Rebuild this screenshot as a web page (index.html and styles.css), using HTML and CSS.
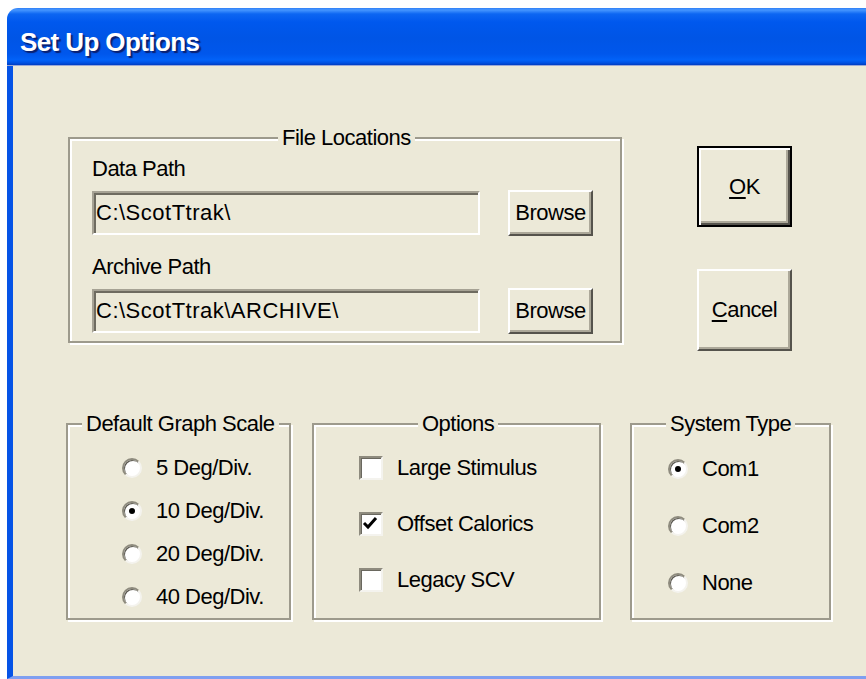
FILE: index.html
```html
<!DOCTYPE html>
<html lang="en">
<head>
<meta charset="utf-8">
<title>Set Up Options</title>
<link rel="stylesheet" href="styles.css">
</head>
<body>
<div class="window">
  <div class="titlebar"><span class="title">Set Up Options</span></div>
  <div class="client">
    <div class="top-row">
      <fieldset class="group group-files">
        <legend class="legend legend-files">File Locations</legend>
        <div class="files-body">
          <div class="path-block">
            <div class="path-label">Data Path</div>
            <div class="path-line">
              <div class="textbox">C:\ScotTtrak\</div>
              <button class="btn btn-browse">Browse</button>
            </div>
          </div>
          <div class="path-block">
            <div class="path-label">Archive Path</div>
            <div class="path-line">
              <div class="textbox">C:\ScotTtrak\ARCHIVE\</div>
              <button class="btn btn-browse">Browse</button>
            </div>
          </div>
        </div>
      </fieldset>
      <div class="actions">
        <button class="btn btn-big btn-default"><u>O</u>K</button>
        <button class="btn btn-big btn-cancel"><u>C</u>ancel</button>
      </div>
    </div>

    <div class="bottom-row">
      <fieldset class="group group-scale">
        <legend class="legend legend-scale">Default Graph Scale</legend>
        <div class="list list-scale">
          <div class="opt opt-scale"><span class="radio"></span><span>5 Deg/Div.</span></div>
          <div class="opt opt-scale"><span class="radio on"></span><span>10 Deg/Div.</span></div>
          <div class="opt opt-scale"><span class="radio"></span><span>20 Deg/Div.</span></div>
          <div class="opt opt-scale"><span class="radio"></span><span>40 Deg/Div.</span></div>
        </div>
      </fieldset>

      <fieldset class="group group-options">
        <legend class="legend legend-options">Options</legend>
        <div class="list list-options">
          <div class="opt opt-check"><span class="checkbox"></span><span>Large Stimulus</span></div>
          <div class="opt opt-check"><span class="checkbox"><svg viewBox="0 0 20 20" width="20" height="20"><polyline points="3,9 7,13 15,4" fill="none" stroke="#000" stroke-width="3"/></svg></span><span>Offset Calorics</span></div>
          <div class="opt opt-check"><span class="checkbox"></span><span>Legacy SCV</span></div>
        </div>
      </fieldset>

      <fieldset class="group group-system">
        <legend class="legend legend-system">System Type</legend>
        <div class="list list-system">
          <div class="opt opt-system"><span class="radio on"></span><span>Com1</span></div>
          <div class="opt opt-system"><span class="radio"></span><span>Com2</span></div>
          <div class="opt opt-system"><span class="radio"></span><span>None</span></div>
        </div>
      </fieldset>
    </div>
  </div>
</div>
</body>
</html>
```

FILE: styles.css
```css
html, body {
  margin: 0;
  padding: 0;
  background: #fff;
  overflow: hidden;
}

body {
  width: 866px;
  height: 679px;
  font-family: "Liberation Sans", Arial, sans-serif;
  font-size: 22px;
  letter-spacing: -0.5px;
  color: #000;
}

/* window frame */
.window {
  margin: 8px 0 0 7px;
  width: 859px;
  height: 671px;
  display: flex;
  flex-direction: column;
}

.titlebar {
  box-sizing: border-box;
  height: 58px;
  padding: 20px 0 0 13px;
  border-radius: 11px 0 0 0;
  background: linear-gradient(to bottom,
    #2f7ff6 0px, #4596ff 2px, #0c66f2 6px, #0058ee 14px,
    #0055e6 30px, #0057ec 46px, #0262f8 52px, #0050e0 55px, #003cc0 57px);
  border-bottom: 1px solid #9aa8d6;
}

.title {
  display: block;
  font-size: 26px;
  line-height: 28px;
  font-weight: bold;
  letter-spacing: -0.6px;
  color: #fff;
  text-shadow: 2px 2px 1px #0a2070;
}

.client {
  flex: 1;
  box-sizing: border-box;
  background: #ece9d8;
  border-left: 6px solid #0553e6;
  border-bottom: 3px solid #7f9ff0;
  padding: 60px 0 0 53px;
}

/* group boxes */
.group {
  margin: 0;
  padding: 0;
  min-width: 0;
  box-sizing: border-box;
  border: 2px solid #9d9a8c;
  box-shadow: inset 2px 2px 0 #fff, 2px 2px 0 #fff;
}

.legend {
  padding: 0 4px;
  line-height: 24px;
  background: #ece9d8;
}

.legend-files { margin-left: 208px; }
.legend-scale { margin-left: 14px; }
.legend-options { margin-left: 104px; }
.legend-system { margin-left: 34px; }

/* top part */
.top-row {
  display: flex;
  align-items: flex-start;
}

.group-files {
  margin-left: 2px;
  width: 554px;
  height: 217px;
}

.files-body {
  padding: 7px 0 0 22px;
  display: flex;
  flex-direction: column;
  gap: 19px;
}

.path-label {
  line-height: 24px;
}

.path-line {
  margin-top: 9px;
  display: flex;
  align-items: center;
  gap: 28px;
}

.textbox {
  box-sizing: border-box;
  width: 388px;
  height: 44px;
  padding: 0 0 0 2px;
  display: flex;
  align-items: center;
  letter-spacing: 0.5px;
  border: 2px solid;
  border-color: #a6a294 #fff #fff #a6a294;
  box-shadow: inset 2px 2px 0 #6e6b60;
}

.btn {
  box-sizing: border-box;
  margin: 0;
  padding: 0;
  font: inherit;
  letter-spacing: inherit;
  color: #000;
  background: #ece9d8;
  border: 2px solid;
  border-color: #fff #55534c #55534c #fff;
  box-shadow: inset -2px -2px 0 #aca899;
}

.btn u {
  text-decoration-thickness: 2px;
  text-underline-offset: 3px;
}

.btn-browse {
  width: 85px;
  height: 46px;
}

.actions {
  margin: 20px 0 0 75px;
  display: flex;
  flex-direction: column;
  gap: 42px;
}

.btn-big {
  width: 95px;
}

.btn-default {
  height: 81px;
  border-color: #000;
  box-shadow: inset 2px 2px 0 #fff, inset -2px -2px 0 #55534c, inset -4px -4px 0 #aca899;
}

.btn-cancel {
  height: 82px;
}

/* bottom part */
.bottom-row {
  margin-top: 61px;
  display: flex;
  align-items: flex-start;
}

.group-scale { width: 225px; height: 208px; }
.group-options { width: 289px; height: 208px; margin-left: 21px; }
.group-system { width: 201px; height: 208px; margin-left: 29px; }

.list { display: flex; flex-direction: column; }
.list-scale { padding: 10px 0 0 54px; }
.list-options { padding: 4px 0 0 45px; }
.list-system { padding: 4px 0 0 36px; }

.opt {
  display: flex;
  align-items: center;
  gap: 14px;
}

.opt-scale { height: 43px; }
.opt-check { height: 56px; }
.opt-system { height: 57px; }

.radio {
  box-sizing: border-box;
  width: 20px;
  height: 20px;
  flex: none;
  border-radius: 50%;
  background: #fff;
  border: 2px solid;
  border-color: #8e8b7e #f4f3ee #f4f3ee #8e8b7e;
  box-shadow: inset 1px 1px 0 #5d5b53;
  display: flex;
  align-items: center;
  justify-content: center;
}

.radio.on::after {
  content: "";
  width: 6px;
  height: 6px;
  border-radius: 50%;
  background: #000;
}

.checkbox {
  box-sizing: border-box;
  width: 24px;
  height: 24px;
  flex: none;
  background: #fff;
  border: 2px solid;
  border-color: #8e8b7e #f4f3ee #f4f3ee #8e8b7e;
  box-shadow: inset 1px 1px 0 #6a685f;
  display: flex;
}
```
